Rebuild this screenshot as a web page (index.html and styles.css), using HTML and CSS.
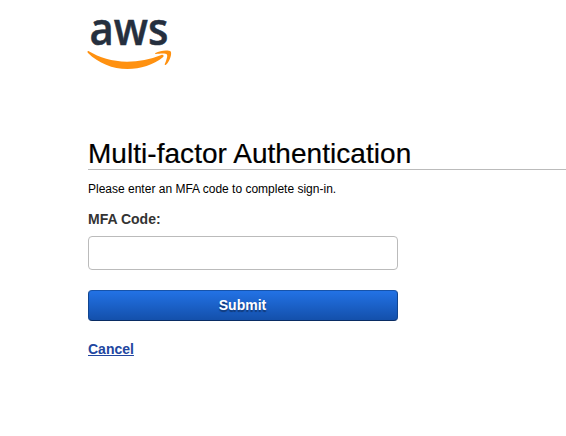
FILE: index.html
```html
<!DOCTYPE html>
<html lang="en">
<head>
<meta charset="utf-8">
<title>Multi-factor Authentication</title>
<link rel="stylesheet" href="styles.css">
</head>
<body>
<main class="page">
  <svg class="logo" width="90" height="74" viewBox="85 0 90 74" role="img" aria-label="aws">
    <text class="logo-text" x="89.5" y="44.5" textLength="79" lengthAdjust="spacingAndGlyphs">aws</text>
    <path class="logo-smile" d="M88.4 51.1C99.500 57.700 112 61.700 127 61.700C139 61.700 150 59.400 161.300 54.900C163.200 54.200 164.500 56 162.900 57.300C153.500 65 140.500 69 127.500 69C112.500 69 98.500 63.300 88 53C87 52 87.600 50.700 88.400 51.100Z"/>
    <path class="logo-smile" d="M155.500 53.100C160 50 169.200 49.800 170.700 51.500C172 53.200 170.300 61 166 64.700C165.200 65.400 164.500 65 164.800 64.100C165.900 61.300 168 56 166.900 54.500C165.700 53 159.400 53.700 156 54.100C155 54.200 154.800 53.700 155.500 53.100Z"/>
  </svg>
  <h1 class="title">Multi-factor Authentication</h1>
  <p class="intro">Please enter an MFA code to complete sign-in.</p>
  <form class="form">
    <label class="label" for="mfa">MFA Code:</label>
    <input class="field" id="mfa" type="text">
    <button class="submit" type="button">Submit</button>
    <a class="cancel" href="#">Cancel</a>
  </form>
</main>
</body>
</html>
```
FILE: styles.css
```css
* { box-sizing: border-box; }
body {
  margin: 0;
  background: #fff;
  color: #000;
  font-family: "Liberation Sans", Arial, sans-serif;
  overflow: hidden;
}
.page { padding: 0 0 0 88px; }
.logo { display: block; margin-left: -3px; overflow: visible; }
.logo-text {
  font: 600 46px "Open Sans", sans-serif;
  fill: #252f3e;
  stroke: #252f3e;
  stroke-width: 0.5px;
}
.logo-smile { fill: #ff9110; }
.title {
  height: 34px;
  margin: 62px 0 0;
  border-bottom: 1px solid #bbb;
  font-size: 28px;
  font-weight: 400;
  line-height: 36px;
  letter-spacing: 0.04px;
  white-space: nowrap;
  -webkit-text-stroke: 0.2px #000;
}
.intro {
  margin: 11px 0 0;
  font-size: 12px;
  line-height: 16px;
}
.form {
  display: flex;
  flex-direction: column;
  align-items: flex-start;
  width: 310px;
}
.label {
  margin-top: 14px;
  color: #333;
  font-size: 14px;
  font-weight: 700;
  line-height: 16px;
}
.field {
  width: 310px;
  height: 34px;
  margin: 9px 0 20px;
  padding: 0 8px;
  border: 1px solid #bbb;
  border-radius: 4px;
}
.submit {
  width: 310px;
  height: 31px;
  padding: 0 1px 2px 0;
  border: 1px solid;
  border-color: #1653aa #11458f #092c63;
  border-radius: 4px;
  background: linear-gradient(#2272e5, #1450ab);
  color: #fff;
  font: 700 14px "Liberation Sans", Arial, sans-serif;
  text-shadow: 0 2px 1px #123a79;
}
.cancel {
  margin-top: 20px;
  color: #2146a0;
  font-size: 14px;
  font-weight: 700;
  line-height: 16px;
}
```
